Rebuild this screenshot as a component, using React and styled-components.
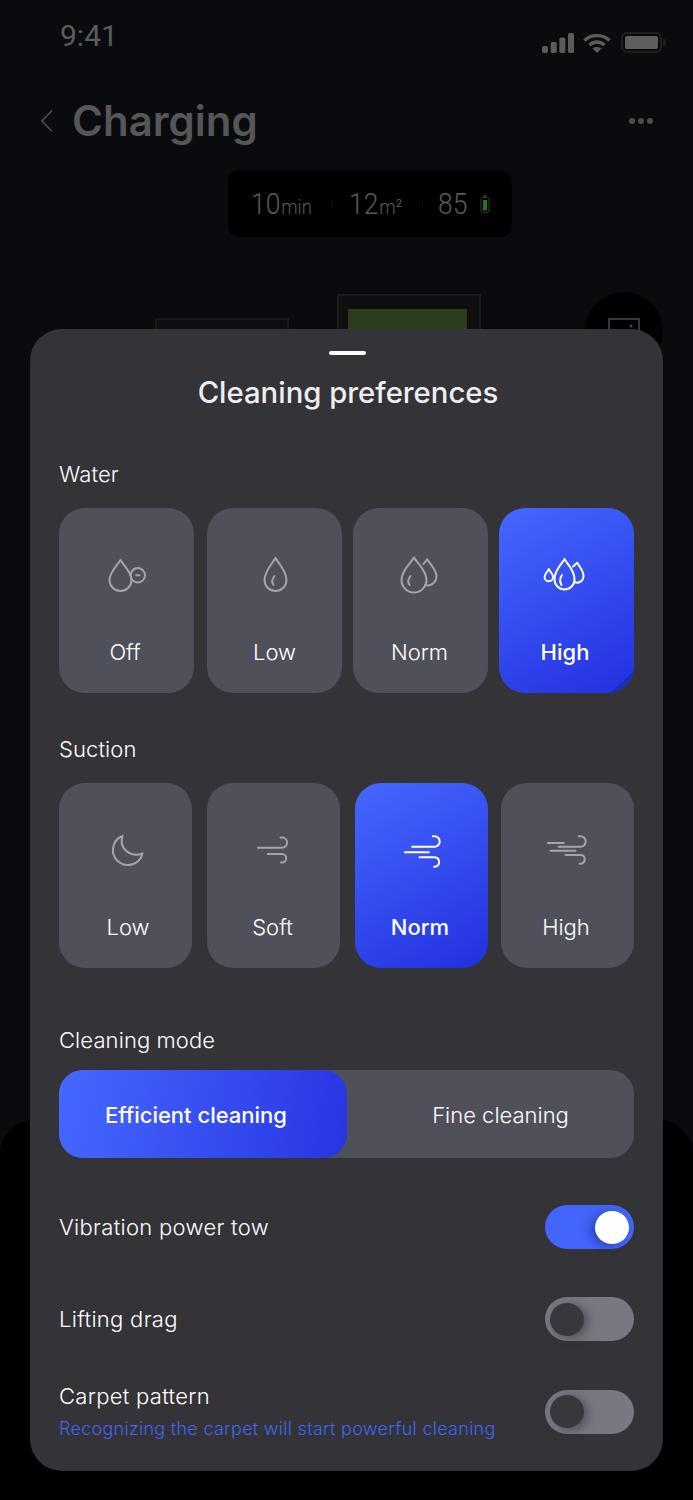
import React from 'react';
import styled, { createGlobalStyle } from 'styled-components';

const GlobalStyle = createGlobalStyle`
    html, body {
        margin: 0;
        padding: 0;
        background: #000;
    }
    * {
        box-sizing: border-box;
    }
`

const FONT = `Inter, Roboto, "Noto Sans", "Liberation Sans", sans-serif`;

const IconOff = () => (
    <svg width="44" height="44" viewBox="0 0 44 44">
        <path d="M15.5 6 C18 10.5 26.5 18 26.5 26 A11 11 0 0 1 4.500 26 C4.500 18 13 10.5 15.500 6 Z" />
        <circle cx="32.8" cy="21.3" r="7.2" />
        <path d="M31.2 21.3 h3.200" />
    </svg>
);

const IconLow = () => (
    <svg width="44" height="44" viewBox="0 0 44 44">
        <path d="M22.5 4 C24.500 8 33.500 17 33.500 26 A11 11 0 0 1 11.500 26 C11.500 17 20.500 8 22.500 4 Z" />
        <path d="M21.5 22 Q17.500 27 20.500 31" />
    </svg>
);

const IconNorm = () => (
    <svg width="44" height="44" viewBox="0 0 44 44">
        <path d="M15 3.500 C17 8 27.500 15.500 27.500 26 A12.500 12.500 0 0 1 2.500 26 C2.500 15.500 13 8 15 3.500 Z" />
        <path d="M24.500 10 L28.200 5.300 C30 9 37.500 15 37.500 22.500 A9 9 0 0 1 26 31" />
        <path d="M11.500 22 Q7.500 27 10.500 31" />
    </svg>
);

const IconHigh = () => (
    <svg width="48" height="44" viewBox="0 0 48 44">
        <path d="M21.500 5 C23 9 31.500 15 31.500 25.500 A10 10 0 0 1 11.500 25.500 C11.500 15 20 9 21.500 5 Z" />
        <path d="M30 12.500 L34.200 8.700 C35.500 12 40.500 16 40.500 22 A6.500 6.500 0 0 1 32 28.300" />
        <path d="M5.800 15 C6.500 17.500 10 19.500 10 23 A4.200 4.200 0 0 1 1.600 23 C1.600 19.500 5 17.500 5.800 15 Z" />
        <path d="M19 21 Q15.500 26 18.500 31" />
    </svg>
);

const IconMoon = () => (
    <svg width="44" height="44" viewBox="0 0 44 44">
        <path d="M18.500 7 A15 15 0 1 0 38.500 24.500 C27 29 14.500 20 18.500 7 Z" />
    </svg>
);

const IconSoft = () => (
    <svg width="44" height="44" viewBox="0 0 44 44">
        <path d="M28.500 8.500 H30 a5.100 5.100 0 0 1 0 10.200 H5.800" />
        <path d="M15.800 25 H30 a4.200 4.200 0 0 1 0 8.400 H29" />
    </svg>
);

const IconWindNorm = () => (
    <svg width="44" height="44" viewBox="0 0 44 44">
        <path d="M32.800 7.300 H34.500 a5.200 5.200 0 0 1 0 10.400 H12.200" />
        <path d="M4.800 23.300 H28.800" />
        <path d="M19.500 28.300 H35 a4.800 4.800 0 0 1 0 9.500 H34" />
    </svg>
);

const IconWindHigh = () => (
    <svg width="44" height="44" viewBox="0 0 44 44">
        <path d="M1.800 14 H17.800" />
        <path d="M32.800 7.300 H34.500 a5.200 5.200 0 0 1 0 10.400 H12.800" />
        <path d="M4.500 21.700 H29.500" />
        <path d="M19.500 26 H35 a4.400 4.400 0 0 1 0 8.700 H33.800" />
    </svg>
);

const water = [
    { label: 'Off', Icon: IconOff, lead: 0, width: 135, nudge: -3 },
    { label: 'Low', Icon: IconLow, lead: 13, width: 135 },
    { label: 'Norm', Icon: IconNorm, lead: 11, width: 135, nudge: -2 },
    { label: 'High', Icon: IconHigh, lead: 11, width: 135, active: true, fold: true, nudge: -3 },
];

const suction = [
    { label: 'Low', Icon: IconMoon, lead: 0, width: 133, nudge: 5 },
    { label: 'Soft', Icon: IconSoft, lead: 15, width: 133, nudge: -2 },
    { label: 'Norm', Icon: IconWindNorm, lead: 15, width: 133, active: true, nudge: -3 },
    { label: 'High', Icon: IconWindHigh, lead: 13, width: 133, nudge: -3 },
];

const Tiles = ({ items }) => (
    <TileRow>
        {items.map(({ label, Icon, lead, width, active, fold, nudge = 0 }) => (
            <Tile key={label} $lead={lead} $width={width} $active={active}>
                <TileIcon $active={active}><Icon /></TileIcon>
                <TileLabel $active={active} $nudge={nudge}>{label}</TileLabel>
                {fold && <Fold />}
            </Tile>
        ))}
    </TileRow>
);

export default function App() {
    return (
        <Screen>
            <GlobalStyle />
            <Backdrop>
                <StatusBar>
                    <Clock>9:41</Clock>
                    <StatusIcons>
                        <svg width="32" height="20" viewBox="0 0 32 20" fill="#5b5b5b">
                            <rect x="0" y="13" width="6" height="7" rx="2" />
                            <rect x="8.700" y="9" width="6" height="11" rx="1.500" />
                            <rect x="17.400" y="4.500" width="6" height="15.500" rx="1.500" />
                            <rect x="26" y="0" width="6" height="20" rx="1.500" />
                        </svg>
                        <svg width="28" height="20" viewBox="0 0 28 20" fill="none" stroke="#5b5b5b" strokeWidth="3.400">
                            <path d="M1.500 7.500 C8 1 20 1 26.500 7.500" />
                            <path d="M6.500 12 C10.500 8 17.500 8 21.500 12" />
                            <path d="M14 20 L9.500 15.500 C12 13.500 16 13.500 18.500 15.500 Z" fill="#5b5b5b" stroke="none" />
                        </svg>
                        <Battery><BatteryFill /></Battery>
                    </StatusIcons>
                </StatusBar>
                <Header>
                    <svg width="14" height="24" viewBox="0 0 14 24" fill="none" stroke="#4a4a4a" strokeWidth="1.800">
                        <path d="M12 1.500 L2 12 L12 22.500" />
                    </svg>
                    <Title>Charging</Title>
                    <Dots><i /><i /><i /></Dots>
                </Header>
                <StatsWrap>
                    <Stats>
                        <Stat $width={80}><StatText>10<small>min</small></StatText></Stat>
                        <StatDivider />
                        <Stat $width={73} $lead={17}><StatText>12<small>m²</small></StatText></Stat>
                        <StatDivider />
                        <Stat $width={42} $lead={15}><StatText>85</StatText></Stat>
                        <svg width="10" height="18" viewBox="0 0 10 18">
                            <rect x="3.500" y="0" width="3" height="2" fill="#3a3a3a" />
                            <rect x="1" y="2.500" width="8" height="15" rx="1.500" fill="none" stroke="#2f3a2c" />
                            <rect x="3" y="5" width="4" height="10.500" fill="#2f6b2a" />
                        </svg>
                    </Stats>
                </StatsWrap>
                <Room />
                <RoomGreen><RoomFill /></RoomGreen>
                <Fab>
                    <svg width="32" height="14" viewBox="0 0 32 14" fill="none" stroke="#4a4a4a" strokeWidth="1.500">
                        <path d="M1 14 V1 H31 V14" />
                        <circle cx="23" cy="8" r="1.500" fill="#4a4a4a" stroke="none" />
                    </svg>
                </Fab>
                <BottomPanel />
            </Backdrop>

            <Sheet>
                <Handle />
                <SheetTitle>Cleaning preferences</SheetTitle>

                <WaterLabel>Water</WaterLabel>
                <Tiles items={water} />

                <SuctionLabel>Suction</SuctionLabel>
                <Tiles items={suction} />

                <ModeLabel>Cleaning mode</ModeLabel>
                <Segments>
                    <Segment $active>Efficient cleaning</Segment>
                    <Segment>Fine cleaning</Segment>
                </Segments>

                <ToggleRow $top={47}>
                    <RowText>Vibration power tow</RowText>
                    <Toggle $on><Knob $on /></Toggle>
                </ToggleRow>
                <ToggleRow $top={48}>
                    <RowText>Lifting drag</RowText>
                    <Toggle><Knob /></Toggle>
                </ToggleRow>
                <ToggleRow $top={41}>
                    <div>
                        <RowText>Carpet pattern</RowText>
                        <Hint>Recognizing the carpet will start powerful cleaning</Hint>
                    </div>
                    <Toggle><Knob /></Toggle>
                </ToggleRow>
            </Sheet>
        </Screen>
    )
}

const Screen = styled.div`
    position: relative;
    width: 693px;
    height: 1500px;
    overflow: hidden;
    background: #000;
    font-family: ${FONT};
`

const Backdrop = styled.div`
    position: absolute;
    inset: 0;
    background: #0a0b0e;
`

const BottomPanel = styled.div`
    position: absolute;
    left: 0;
    right: 0;
    top: 1120px;
    bottom: 0;
    background: #000;
    border-radius: 34px 34px 0 0;
`

const StatusBar = styled.div`
    display: flex;
    justify-content: space-between;
    align-items: flex-start;
    padding: 19px 31px 0 60px;
    height: 83px;
`

const Clock = styled.div`
    font-family: Roboto, sans-serif;
    font-size: 30px;
    line-height: 34px;
    font-weight: 400;
    color: #5c5c5c;
`

const StatusIcons = styled.div`
    display: flex;
    align-items: center;
    gap: 9px;
    padding: 13px 0 0 0;
`

const Battery = styled.div`
    position: relative;
    width: 41px;
    height: 21px;
    margin-left: 1px;
    padding: 2px;
    border: 2px solid #1f1f1f;
    border-radius: 6px;
    &::after {
        content: '';
        position: absolute;
        right: -6px;
        top: 5px;
        width: 3px;
        height: 7px;
        border-radius: 0 2px 2px 0;
        background: #1f1f1f;
    }
`

const BatteryFill = styled.div`
    width: 100%;
    height: 100%;
    border-radius: 2px;
    background: #5e5e5e;
`

const Header = styled.div`
    display: flex;
    align-items: center;
    height: 76px;
    padding: 0 40px 0 40px;
`

const Title = styled.h1`
    margin: 0 0 2px 18px;
    flex: 1;
    font-size: 42px;
    font-weight: 600;
    color: #565656;
`

const Dots = styled.div`
    display: flex;
    gap: 3px;
    i {
        width: 6px;
        height: 6px;
        border-radius: 50%;
        background: #4d4d4d;
    }
`

const StatsWrap = styled.div`
    display: flex;
    padding: 11px 0 0 228px;
`

const Stats = styled.div`
    display: flex;
    align-items: center;
    width: 284px;
    height: 67px;
    padding: 0 0 0 23px;
    background: #000;
    border-radius: 12px;
`

const Stat = styled.div`
    width: ${p => p.$width}px;
    margin-left: ${p => p.$lead || 0}px;
    white-space: nowrap;
`

const StatText = styled.span`
    display: inline-block;
    transform: scaleX(.88);
    transform-origin: left center;
    font-family: Roboto, sans-serif;
    font-weight: 300;
    font-size: 30px;
    color: #5a5a5a;
    small {
        font-size: 21px;
        margin-left: 1px;
    }
`

const StatDivider = styled.div`
    width: 1px;
    height: 10px;
    background: #0f0f0f;
`

const Room = styled.div`
    position: absolute;
    left: 155px;
    top: 318px;
    width: 134px;
    height: 40px;
    background: #0d0e0e;
    border: 2px solid #1a1a1a;
`

const RoomGreen = styled.div`
    position: absolute;
    left: 337px;
    top: 294px;
    width: 144px;
    height: 60px;
    padding: 13px 9px;
    background: #0e0f0e;
    border: 2px solid #1c1c1c;
`

const RoomFill = styled.div`
    width: 119px;
    height: 40px;
    background: #2a3d1c;
`

const Fab = styled.div`
    position: absolute;
    left: 585px;
    top: 292px;
    display: flex;
    justify-content: center;
    width: 78px;
    height: 78px;
    padding: 26px 0 0 0;
    border-radius: 50%;
    background: #000;
`

const Sheet = styled.div`
    position: absolute;
    left: 30px;
    top: 329px;
    width: 633px;
    height: 1142px;
    padding: 22px 29px 0;
    background: #333338;
    border-radius: 32px;
    color: #fff;
`

const Handle = styled.div`
    width: 37px;
    height: 4px;
    margin: 0 0 0 270px;
    border-radius: 2px;
    background: #fff;
`

const SheetTitle = styled.h2`
    margin: 20px 0 0;
    padding-left: 3px;
    text-align: center;
    font-size: 29.3px;
    line-height: 36px;
    font-weight: 500;
    color: #eeeef0;
`

const SectionLabel = styled.div`
    font-size: 22px;
    line-height: 28px;
    font-weight: 300;
    letter-spacing: .1px;
    color: #fff;
`

const WaterLabel = styled(SectionLabel)`
    margin-top: 49px;
    margin-bottom: 20px;
`

const SuctionLabel = styled(SectionLabel)`
    margin-top: 42px;
    margin-bottom: 20px;
`

const ModeLabel = styled(SectionLabel)`
    margin-top: 58px;
    margin-bottom: 16px;
`

const TileRow = styled.div`
    display: flex;
`

const Tile = styled.div`
    position: relative;
    overflow: hidden;
    display: flex;
    flex-direction: column;
    align-items: center;
    width: ${p => p.$width}px;
    height: 185px;
    margin-left: ${p => p.$lead}px;
    padding-top: 46px;
    border-radius: 26px;
    background: ${p => p.$active ? 'linear-gradient(150deg, #4668ff 0%, #2230e0 100%)' : '#50505a'};
`

const TileIcon = styled.div`
    display: flex;
    justify-content: center;
    align-items: center;
    height: 44px;
    svg {
        fill: none;
        stroke: ${p => p.$active ? '#fff' : '#a5a5a9'};
        stroke-width: 2;
        stroke-linecap: round;
        stroke-linejoin: round;
    }
`

const TileLabel = styled.div`
    margin-top: 40px;
    margin-left: ${p => p.$nudge}px;
    font-size: 22px;
    line-height: 28px;
    font-weight: ${p => p.$active ? 500 : 300};
    color: #fff;
`

const Fold = styled.div`
    position: absolute;
    right: 0;
    bottom: 0;
    width: 24px;
    height: 22px;
    background: linear-gradient(138deg, transparent 50%, #1c2fb0 50%);
`

const Segments = styled.div`
    display: flex;
    width: 575px;
    height: 88px;
    border-radius: 24px;
    background: #50505a;
`

const Segment = styled.div`
    display: flex;
    align-items: center;
    justify-content: center;
    width: ${p => p.$active ? '288px' : '287px'};
    padding: ${p => p.$active ? '2px 14px 0 0' : '2px 0 0 20px'};
    border-radius: 24px;
    font-size: 22px;
    font-weight: ${p => p.$active ? 500 : 300};
    color: #fff;
    background: ${p => p.$active ? 'linear-gradient(100deg, #4668ff 0%, #2835e4 100%)' : 'transparent'};
`

const ToggleRow = styled.div`
    display: flex;
    align-items: center;
    justify-content: space-between;
    margin-top: ${p => p.$top}px;
`

const RowText = styled.div`
    font-size: 22px;
    line-height: 28px;
    font-weight: 300;
    letter-spacing: .3px;
    color: #fff;
`

const Hint = styled.div`
    margin-top: 7px;
    font-size: 18px;
    line-height: 24px;
    font-weight: 300;
    letter-spacing: .28px;
    color: #4463f2;
`

const Toggle = styled.div`
    display: flex;
    align-items: center;
    justify-content: ${p => p.$on ? 'flex-end' : 'flex-start'};
    width: 89px;
    height: 44px;
    padding: 0 5px;
    border-radius: 22px;
    background: ${p => p.$on ? '#4465fb' : '#787882'};
`

const Knob = styled.div`
    width: 34px;
    height: 33px;
    border-radius: 50%;
    background: ${p => p.$on ? '#fff' : '#38383c'};
    box-shadow: ${p => p.$on ? '-4px 2px 10px rgba(20,30,120,.5)' : '4px 2px 10px rgba(40,40,46,.5)'};
`
